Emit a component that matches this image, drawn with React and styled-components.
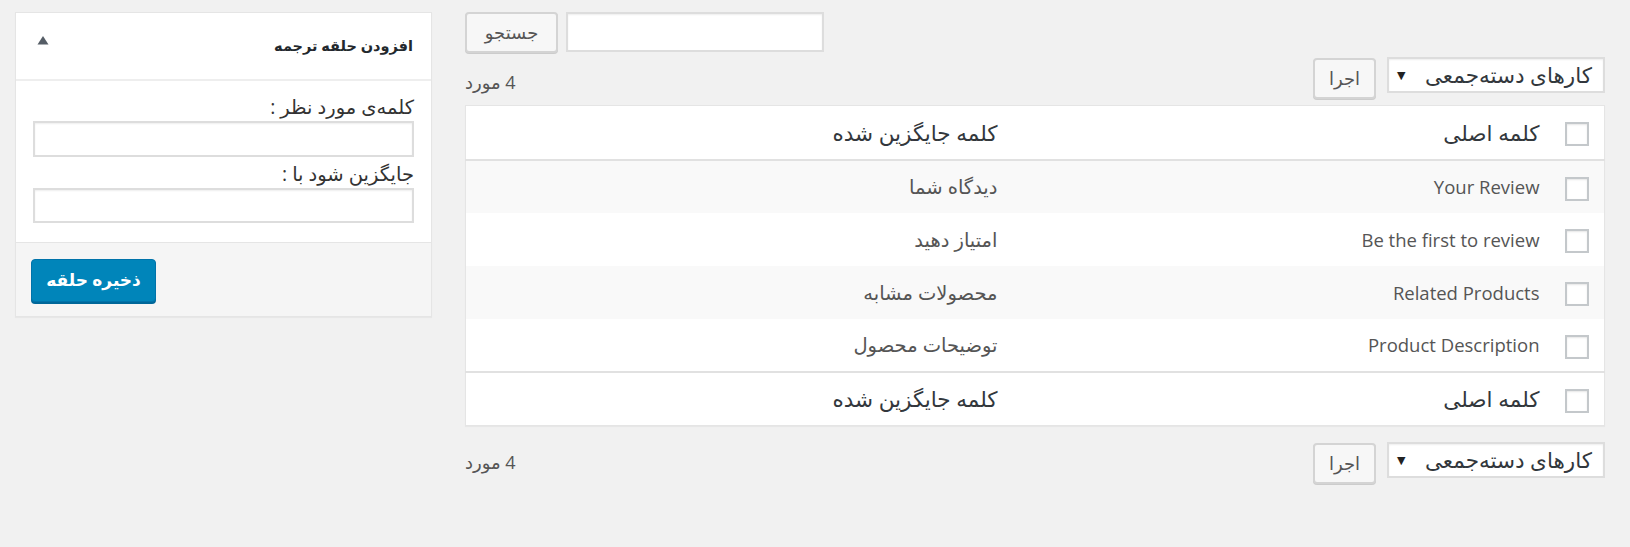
import React from "react";
import styled, { createGlobalStyle } from "styled-components";

const GlobalStyle = createGlobalStyle`
  html, body {
    margin: 0;
    padding: 0;
    background: #f1f1f1;
  }
  body {
    font-family: "Open Sans", "DejaVu Sans", sans-serif;
    color: #444;
  }
  * { box-sizing: border-box; }
`;

const FA = `"Open Sans", "DejaVu Sans", sans-serif`;

const Page = styled.div`
  display: flex;
  align-items: flex-start;
  gap: 33px;
  padding: 12px 25px 40px 15px;
  min-height: 547px;
`;

/* ---------- Sidebar ---------- */
const Sidebar = styled.aside`
  width: 417px;
  flex: none;
  background: #fff;
  border: 1px solid #e5e5e5;
  box-shadow: 0 1px 1px rgba(0, 0, 0, 0.04);
  direction: rtl;
`;

const BoxHeader = styled.div`
  height: 68px;
  display: flex;
  align-items: center;
  justify-content: space-between;
  padding: 0 18px 0 21px;
  border-bottom: 2px solid #eeeeee;
`;

const BoxTitle = styled.h2`
  margin: 0;
  font-family: ${FA};
  font-size: 14.5px;
  font-weight: 700;
  color: #23282d;
  line-height: 20px;
`;

const Toggle = styled.span`
  display: flex;
  align-self: flex-start;
  margin-top: 22px;
`;

const BoxBody = styled.div`
  padding: 14px 17px 19px 17px;
  display: flex;
  flex-direction: column;
  border-bottom: 1px solid #e5e5e5;
`;

const FieldLabel = styled.label`
  font-family: ${FA};
  font-size: 19.5px;
  line-height: 24px;
  color: #333;
  margin-top: ${(p) => p.$gap || 0}px;
`;

const TextInput = styled.input`
  display: block;
  width: 100%;
  height: ${(p) => p.$h || 36}px;
  margin-top: ${(p) => p.$mt || 1}px;
  border: 2px solid #dddddd;
  background: #fff;
  box-shadow: inset 0 1px 2px rgba(0, 0, 0, 0.07);
  outline: none;
  font-size: 16px;
`;

const BoxFooter = styled.div`
  background: #f5f5f5;
  padding: 16px 15px 14px;
  display: flex;
  justify-content: flex-end;
  direction: rtl;
`;

const PrimaryButton = styled.button`
  width: 125px;
  height: 43px;
  border-radius: 4px;
  border: 1px solid #0073aa;
  background: #0085ba;
  box-shadow: 0 2px 0 #006799;
  color: #fff;
  font-family: ${FA};
  font-size: 17px;
  font-weight: 700;
  padding: 0 0 3px;
  cursor: pointer;
`;

/* ---------- Main ---------- */
const Main = styled.main`
  flex: 1;
  min-width: 0;
  display: flex;
  flex-direction: column;
`;

const SearchRow = styled.div`
  display: flex;
  align-items: flex-start;
  gap: 8px;
  height: 41px;
`;

const SecondaryButton = styled.button`
  width: ${(p) => p.$w}px;
  height: 41px;
  margin-top: ${(p) => p.$mt || 0}px;
  border-radius: 4px;
  border: 2px solid #d4d4d4;
  background: #f7f7f7;
  box-shadow: 0 1px 0 #cccccc;
  color: #555;
  font-family: ${FA};
  font-size: 18px;
  padding: 0 0 2px;
  direction: rtl;
  cursor: pointer;
`;

const SearchInput = styled.input`
  width: 258px;
  height: 40px;
  border: 2px solid #dddddd;
  background: #fff;
  box-shadow: inset 0 1px 2px rgba(0, 0, 0, 0.07);
  outline: none;
`;

const TableNav = styled.div`
  display: flex;
  align-items: flex-start;
  justify-content: space-between;
  height: ${(p) => (p.$bottom ? 60 : 52)}px;
  padding-top: ${(p) => (p.$bottom ? 16 : 4)}px;
`;

const Count = styled.span`
  font-family: ${FA};
  font-size: 18px;
  line-height: 24px;
  color: #555;
  direction: rtl;
  margin-top: ${(p) => p.$mt}px;
`;

const Actions = styled.div`
  display: flex;
  align-items: flex-start;
  gap: 11px;
`;

const SelectBox = styled.div`
  width: 218px;
  height: 36px;
  border: 2px solid #dddddd;
  background: #fff;
  box-shadow: inset 0 1px 2px rgba(0, 0, 0, 0.07);
  display: flex;
  align-items: center;
  justify-content: space-between;
  padding: 0 11px 2px 8px;
  font-family: ${FA};
  font-size: 21.5px;
  color: #32373c;
`;

const SelectText = styled.span`
  direction: rtl;
  white-space: nowrap;
`;

const Arrow = styled.span`
  font-size: 11px;
  color: #222;
  margin-top: 1px;
`;

const Table = styled.table`
  width: 100%;
  table-layout: fixed;
  border-collapse: collapse;
  background: #fff;
  border: 1px solid #e5e5e5;
  box-shadow: 0 1px 1px rgba(0, 0, 0, 0.04);
  direction: rtl;
`;

const CheckCol = styled.col`
  width: 55px;
`;

const HeadCell = styled.th`
  height: 54px;
  padding: 0 10px 0 10px;
  text-align: right;
  font-family: ${FA};
  font-size: 21.5px;
  font-weight: 400;
  color: #32373c;
  vertical-align: middle;
  border-bottom: ${(p) => (p.$foot ? "0" : "2px solid #e1e1e1")};
  border-top: ${(p) => (p.$foot ? "2px solid #e1e1e1" : "0")};
`;

const Row = styled.tr`
  background: ${(p) => (p.$alt ? "#f9f9f9" : "#fff")};
`;

const Cell = styled.td`
  height: 53px;
  padding: 0 10px;
  text-align: right;
  font-family: ${FA};
  font-size: ${(p) => (p.$fa ? 19.5 : 18.5)}px;
  color: #555;
  vertical-align: middle;
`;

const CheckCell = styled.td`
  padding: 4px 15px 0 0;
  vertical-align: middle;
  border-top: ${(p) => (p.$foot ? "2px solid #e1e1e1" : "0")};
  border-bottom: ${(p) => (p.$head ? "2px solid #e1e1e1" : "0")};
`;

const Checkbox = styled.span`
  display: block;
  width: 24px;
  height: 24px;
  border: 2px solid #c4c8cb;
  background: #fff;
  box-shadow: inset 0 1px 2px rgba(0, 0, 0, 0.1);
`;

const rows = [
  ["Your Review", "دیدگاه شما"],
  ["Be the first to review", "امتیاز دهید"],
  ["Related Products", "محصولات مشابه"],
  ["Product Description", "توضیحات محصول"],
];

const BulkActions = () => (
  <Actions>
    <SecondaryButton $w={63} $mt={1}>اجرا</SecondaryButton>
    <SelectBox>
      <Arrow>▼</Arrow>
      <SelectText>کارهای دسته‌جمعی</SelectText>
    </SelectBox>
  </Actions>
);

export default function App() {
  return (
    <>
      <GlobalStyle />
      <Page>
        <Sidebar>
          <BoxHeader>
            <BoxTitle>افزودن حلقه ترجمه</BoxTitle>
            <Toggle>
              <svg width="12" height="10" viewBox="0 0 12 10">
                <polygon points="6,1 11.5,9.5 0.5,9.5" fill="#555d66" />
              </svg>
            </Toggle>
          </BoxHeader>
          <BoxBody>
            <FieldLabel>کلمه‌ی مورد نظر :</FieldLabel>
            <TextInput $h={36} $mt={2} />
            <FieldLabel $gap={5}>جایگزین شود با :</FieldLabel>
            <TextInput $h={35} $mt={2} />
          </BoxBody>
          <BoxFooter>
            <PrimaryButton>ذخیره حلقه</PrimaryButton>
          </BoxFooter>
        </Sidebar>

        <Main>
          <SearchRow>
            <SecondaryButton $w={93}>جستجو</SecondaryButton>
            <SearchInput />
          </SearchRow>

          <TableNav>
            <Count $mt={13}>4 مورد</Count>
            <BulkActions />
          </TableNav>

          <Table>
            <colgroup>
              <CheckCol />
              <col />
              <col />
            </colgroup>
            <thead>
              <tr>
                <CheckCell $head>
                  <Checkbox />
                </CheckCell>
                <HeadCell>کلمه اصلی</HeadCell>
                <HeadCell>کلمه جایگزین شده</HeadCell>
              </tr>
            </thead>
            <tbody>
              {rows.map(([orig, repl], i) => (
                <Row key={orig} $alt={i % 2 === 0}>
                  <CheckCell>
                    <Checkbox />
                  </CheckCell>
                  <Cell>{orig}</Cell>
                  <Cell $fa>{repl}</Cell>
                </Row>
              ))}
            </tbody>
            <tfoot>
              <tr>
                <CheckCell $foot>
                  <Checkbox />
                </CheckCell>
                <HeadCell $foot>کلمه اصلی</HeadCell>
                <HeadCell $foot>کلمه جایگزین شده</HeadCell>
              </tr>
            </tfoot>
          </Table>

          <TableNav $bottom>
            <Count $mt={8}>4 مورد</Count>
            <BulkActions />
          </TableNav>
        </Main>
      </Page>
    </>
  );
}
